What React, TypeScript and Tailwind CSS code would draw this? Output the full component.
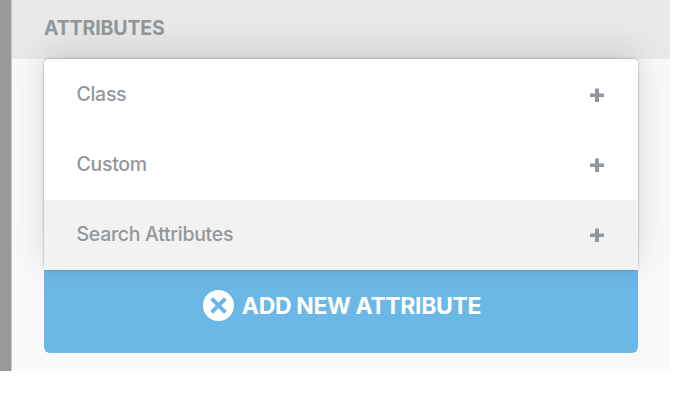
const rows = [
  { label: 'Class', className: 'rounded-t-[5px] bg-white h-[71px] pt-px' },
  { label: 'Custom', className: 'bg-white h-[70px]' },
  { label: 'Search Attributes', className: 'bg-[#f2f2f2] h-[70px]' },
];

function Plus() {
  return (
    <svg className="h-[14px] w-[14px]" viewBox="0 0 14 14" fill="#92979b">
      <path d="M5 .5h4v5h5v3.5H9v5H5v-5H0V5.5h5z" />
    </svg>
  );
}

function CircleX() {
  return (
    <svg className="-mt-px h-[31px] w-[31px]" viewBox="0 0 31 31">
      <circle cx="15.5" cy="15.5" r="15.5" fill="#fff" />
      <path d="M8.6 8.6l13.8 13.8M22.4 8.6L8.6 22.4" stroke="#6bb7e6" strokeWidth="4" />
    </svg>
  );
}

export default function App() {
  return (
    <div className="h-[402px] w-[674px] overflow-hidden bg-white font-['Inter',sans-serif] text-[#92979b]">
      <div className="flex h-[371px] w-[670px]">
        <div className="w-3 shrink-0 border-r border-[#c9c9c9] bg-[#999]" />
        <div className="flex-1 overflow-hidden bg-[#f9f9f9]">
          <h2 className="flex h-[59px] items-center bg-[#e9e9e9] pb-px pl-8 text-[19.5px] font-bold leading-none tracking-[-0.13px]">
            <span>ATTRIBUTES</span>
          </h2>
          <div className="relative z-10 ml-8 w-[594px] rounded-[5px] shadow-[0_0_2px_1px_rgba(0,0,0,0.16),0_-8px_36px_rgba(0,0,0,0.13)]">
            {rows.map((row) => (
              <div key={row.label} className={`flex items-center justify-between pr-[34px] pl-[32.5px] ${row.className}`}>
                <span className="text-[19.5px] leading-none font-[450] tracking-[-0.3px]">{row.label}</span>
                <Plus />
              </div>
            ))}
          </div>
          <button className="ml-8 flex h-[83px] w-[594px] items-center justify-center gap-2 rounded-b-[6px] bg-[#6bb7e6] pb-[11px] pl-[2px] text-white">
            <CircleX />
            <span className="text-[23px] font-bold leading-none tracking-[-0.36px]">ADD NEW ATTRIBUTE</span>
          </button>
        </div>
      </div>
    </div>
  );
}
